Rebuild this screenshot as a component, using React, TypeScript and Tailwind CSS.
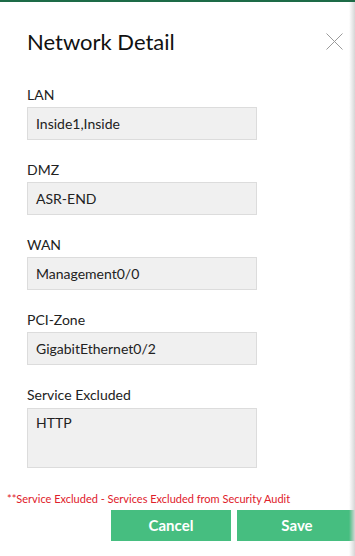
import React from 'react';

const fields = [
  { label: 'LAN', value: 'Inside1,Inside' },
  { label: 'DMZ', value: 'ASR-END' },
  { label: 'WAN', value: 'Management0/0' },
  { label: 'PCI-Zone', value: 'GigabitEthernet0/2' },
];

export default function App() {
  return (
    <div className="relative w-[355px] h-[556px] overflow-hidden bg-white border-t-2 border-[#1d6b47] font-['Lato','Liberation_Sans',sans-serif] text-[#222]">
      {/* header */}
      <div className="flex items-start justify-between pl-[27px] pr-[12px] pt-[27px]">
        <h1 className="text-[22px] leading-[26px] font-normal text-[#111]">Network Detail</h1>
        <button className="mt-[4px] w-[17px] h-[17px]" aria-label="Close">
          <svg viewBox="0 0 17 17" width="17" height="17">
            <path d="M0.5 0.5 L16.5 16.5 M16.5 0.5 L0.5 16.5" stroke="#9a9a9a" strokeWidth="1" fill="none" />
          </svg>
        </button>
      </div>

      {/* fields */}
      <div className="flex flex-col pl-[27px] pt-[31px]">
        {fields.map((f) => (
          <div key={f.label} className="flex flex-col mb-[21px]">
            <label className="text-[14px] leading-[17px]">{f.label}</label>
            <div className="mt-[4px] w-[230px] h-[33px] flex items-center px-[8px] bg-[#f0f0f0] border border-[#dcdcdc] text-[14px] text-[#222]">
              {f.value}
            </div>
          </div>
        ))}
        <div className="flex flex-col">
          <label className="text-[14px] leading-[17px]">Service Excluded</label>
          <div className="mt-[5px] w-[230px] h-[60px] px-[8px] pt-[5px] bg-[#f0f0f0] border border-[#dcdcdc] text-[14px] leading-[17px] text-[#222]">
            HTTP
          </div>
        </div>
      </div>

      {/* note */}
      <p className="pl-[7px] mt-[24px] text-[11px] leading-[13px] text-[#e0202a]">
        **Service Excluded - Services Excluded from Security Audit
      </p>

      {/* actions */}
      <div className="flex gap-[6px] pl-[111px] mt-[5px]">
        <button className="shrink-0 w-[120px] h-[31px] bg-[#46be80] text-white text-[15px] font-bold">Cancel</button>
        <button className="shrink-0 w-[120px] h-[31px] bg-[#46be80] text-white text-[15px] font-bold">Save</button>
      </div>

      {/* right edge shadow */}
      <div className="absolute top-0 right-0 w-[6px] h-full bg-gradient-to-r from-white/0 to-[#d6d6d6]" />
    </div>
  );
}
